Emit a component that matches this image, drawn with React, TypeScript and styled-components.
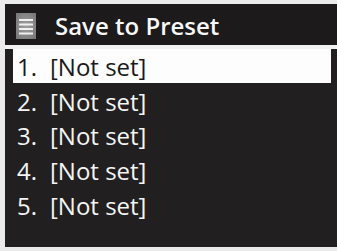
import React from "react";
import styled, { createGlobalStyle } from "styled-components";

const Global = createGlobalStyle`
  html, body { margin: 0; padding: 0; background: #ebebeb; }
  body { font-family: "Open Sans", "Liberation Sans", sans-serif; }
`;

const Screen = styled.div`
  margin: 4px 0 0 5px;
  width: 332px;
  height: 243px;
  background: #221f20;
  display: flex;
  flex-direction: column;
  overflow: hidden;
`;

const Header = styled.div`
  height: 41px;
  display: flex;
  align-items: center;
  padding-left: 11px;
  gap: 19px;
  border-bottom: 4px solid #f2f2f2;
  background: #1c1a1b;
`;

const IconBox = styled.div`
  flex-shrink: 0;
  width: 20px;
  height: 26px;
  display: flex;
  margin-top: 2px;
`;

const Title = styled.div`
  color: #f7f7f7;
  font-size: 24px;
  font-weight: 600;
  line-height: 1;
  padding-top: 3px;
`;

const List = styled.div`
  display: flex;
  flex-direction: column;
  padding: 0 6px 0 8px;
`;

const Row = styled.div<{ $active?: boolean; $h: number }>`
  height: ${(p) => p.$h}px;
  display: flex;
  align-items: center;
  padding-left: 4px;
  font-size: 24px;
  font-weight: 500;
  color: ${(p) => (p.$active ? "#1b1919" : "#f4f4f4")};
  background: ${(p) => (p.$active ? "#fdfdfd" : "transparent")};
`;

const Num = styled.span`
  width: 33px;
`;

const MenuIcon = () => (
  <IconBox>
    <svg width="20" height="26" viewBox="0 0 20 26">
      <defs>
        <radialGradient id="g" cx="50%" cy="50%" r="75%">
          <stop offset="0%" stopColor="#a0a0a0" />
          <stop offset="100%" stopColor="#727272" />
        </radialGradient>
      </defs>
      <rect x="0" y="0" width="20" height="26" fill="url(#g)" />
      {[7, 11.5, 16, 20.5].map((y) => (
        <rect key={y} x="3" y={y - 1} width="14" height="2" fill="#f0f0f0" />
      ))}
    </svg>
  </IconBox>
);

const rows = [
  { n: "1.", h: 34 },
  { n: "2.", h: 36 },
  { n: "3.", h: 32 },
  { n: "4.", h: 38 },
  { n: "5.", h: 33 },
];

export default function App() {
  return (
    <>
      <Global />
      <Screen>
        <Header>
          <MenuIcon />
          <Title>Save to Preset</Title>
        </Header>
        <List>
          {rows.map((r, i) => (
            <Row key={r.n} $active={i === 0} $h={r.h}>
              <Num>{r.n}</Num>
              <span>[Not set]</span>
            </Row>
          ))}
        </List>
      </Screen>
    </>
  );
}
